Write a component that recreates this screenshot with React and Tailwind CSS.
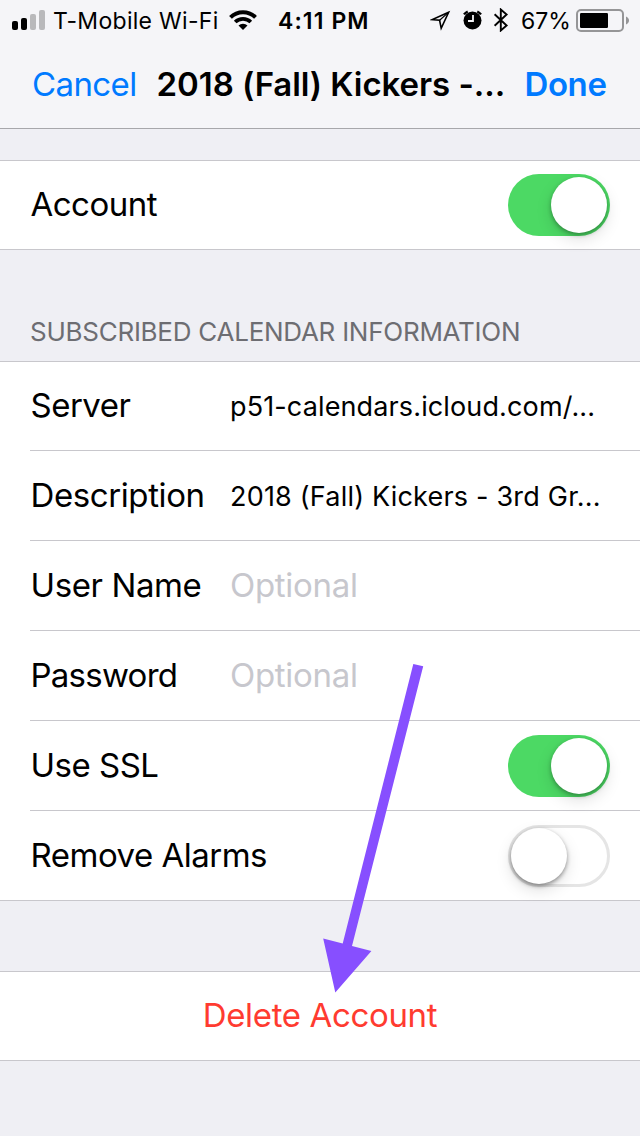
import React from "react";

function Label({ children, className = "tracking-[-0.5px]" }) {
  return <span className={"block whitespace-nowrap pb-[2px] text-[33px] leading-[40px] " + className}>{children}</span>;
}

function Toggle({ on }) {
  return on ? (
    <div className="flex h-[62px] w-[102px] items-center justify-end rounded-full bg-[#4cd964] pr-[3px]">
      <div className="h-14 w-14 rounded-full bg-white shadow-[0_6px_16px_rgba(0,0,0,0.13),0_2px_4px_rgba(0,0,0,0.3)]" />
    </div>
  ) : (
    <div className="flex h-[62px] w-[102px] items-center rounded-full border-[3px] border-[#e5e5e5] bg-white">
      <div className="h-14 w-14 rounded-full bg-white shadow-[0_6px_16px_rgba(0,0,0,0.13),0_2px_4px_rgba(0,0,0,0.4)]" />
    </div>
  );
}

function Row({ label, labelClass, height = "h-[90px]", last, children }) {
  return (
    <div className="flex pl-[30px]">
      <div className={"flex flex-1 items-center pr-[30px] " + height + (last ? "" : " border-b border-[#c8c7cc]")}>
        <div className="w-[200px] shrink-0 pl-[0.5px]"><Label className={labelClass}>{label}</Label></div>
        {children}
      </div>
    </div>
  );
}

function StatusBar() {
  return (
    <div className="flex h-10 items-center">
      <svg className="ml-3 h-[20px] w-[33px]" viewBox="0 0 33 20">
        <rect x="0" y="11" width="6" height="9" rx="2" />
        <rect x="9" y="8" width="6" height="12" rx="2" />
        <rect x="18" y="4" width="6" height="16" rx="2" fill="#b9b9bb" />
        <rect x="27" y="0" width="6" height="20" rx="2" fill="#b9b9bb" />
      </svg>
      <span className="ml-2 w-[176px] whitespace-nowrap pt-[2px] text-[23px] tracking-[0.3px]">T-Mobile Wi-Fi</span>
      <svg className="h-5 w-7" viewBox="0 0 28 20" fill="none" stroke="#000">
        <path d="M1.5 7.3a17.8 17.8 0 0 1 25 0" strokeWidth="4" />
        <path d="M6.2 12a11.2 11.2 0 0 1 15.6 0" strokeWidth="3.8" />
        <path d="M14 20 9.5 15.6a6.4 6.4 0 0 1 9 0z" fill="#000" stroke="none" />
      </svg>
      <span className="ml-[21px] w-[152px] whitespace-nowrap pt-[2px] text-[23px] font-semibold tracking-[1.1px]">4:11 PM</span>
      <svg className="h-6 w-20" viewBox="0 0 80 24" fill="none" stroke="#000">
        <path d="M18.6 4.3 2.4 11.6 9.6 12.3 11.2 20.3z" strokeWidth="1.6" />
        <path d="M18.6 4.3 9.6 12.3" strokeWidth="1.2" />
        <circle cx="42.5" cy="12.5" r="9" fill="#000" stroke="none" />
        <path d="M33.9 6.4a12 12 0 0 1 3.8-3M51.1 6.4a12 12 0 0 0-3.8-3" strokeWidth="2.2" />
        <path d="M43 7v6h-5" stroke="#f5f5f8" strokeWidth="1.8" />
        <path d="m64.6 6.3 12 11.2-5.8 5V1.5l5.8 5-12 11.2" strokeWidth="1.9" />
      </svg>
      <span className="ml-[11px] w-[55px] whitespace-nowrap pt-[2px] text-[23px]">67%</span>
      <svg className="h-6 w-14" viewBox="0 0 56 24">
        <rect x="1" y="2" width="46" height="21" rx="4" fill="none" stroke="#959597" strokeWidth="2" />
        <rect x="4" y="5" width="28" height="15" rx="1.2" />
        <path d="M50 8.5c4 1.5 4 6.5 0 8z" fill="#959597" />
      </svg>
    </div>
  );
}

export default function App() {
  return (
    <div className="relative flex h-[1136px] w-[640px] flex-col overflow-hidden bg-[#efeff4] font-['Inter',sans-serif] text-black">
      <header className="h-[129px] border-b border-[#a7a7ab] bg-[#f5f5f8]">
        <StatusBar />
        <div className="flex h-[90px] items-center pl-8">
          <div className="w-[124.5px] text-[#007aff]"><Label className="tracking-[-0.6px]">Cancel</Label></div>
          <div className="w-[368px]"><Label className="font-semibold tracking-[-0.05px]">2018 (Fall) Kickers -...</Label></div>
          <div className="text-[#007aff]"><Label className="font-semibold tracking-[-0.4px]">Done</Label></div>
        </div>
      </header>
      <section className="mt-[31px] border-y border-[#c8c7cc] bg-white">
        <Row label="Account" height="h-[88px]" last><div className="ml-auto"><Toggle on /></div></Row>
      </section>
      <h2 className="mt-[66px] h-[45px] pl-[30px] text-[26px] leading-8 tracking-[-0.26px] text-[#6d6d72]">SUBSCRIBED CALENDAR INFORMATION</h2>
      <section className="border-y border-[#c8c7cc] bg-white">
        <Row label="Server" height="h-[89px]"><span className="whitespace-nowrap pt-[3px] text-[27px] tracking-[0.13px]">p51-calendars.icloud.com/...</span></Row>
        <Row label="Description" labelClass="tracking-[-0.4px]"><span className="whitespace-nowrap pt-[3px] text-[27px] tracking-[0.2px]">2018 (Fall) Kickers - 3rd Gr...</span></Row>
        <Row label="User Name" labelClass="tracking-[-0.4px]"><Label className="tracking-[-0.3px] text-[#c7c7cd]">Optional</Label></Row>
        <Row label="Password" labelClass="tracking-[-0.75px]"><Label className="tracking-[-0.3px] text-[#c7c7cd]">Optional</Label></Row>
        <Row label="Use SSL"><div className="ml-auto"><Toggle on /></div></Row>
        <Row label="Remove Alarms" height="h-[89px]" last><div className="ml-auto"><Toggle /></div></Row>
      </section>
      <section className="mt-[70px] flex h-[90px] items-center justify-center border-y border-[#c8c7cc] bg-white text-[#ff3b30]">
        <Label className="tracking-[-0.35px]">Delete Account</Label>
      </section>
      <svg className="pointer-events-none absolute left-[320px] top-[660px] h-[336px] w-[106px]" viewBox="320 660 106 336" fill="#874fff">
        <path d="M413.3 664 423.2 666.2 352 946 371.4 951 335.3 992.6 323.2 938.5 342.7 943.5z" />
      </svg>
    </div>
  );
}
